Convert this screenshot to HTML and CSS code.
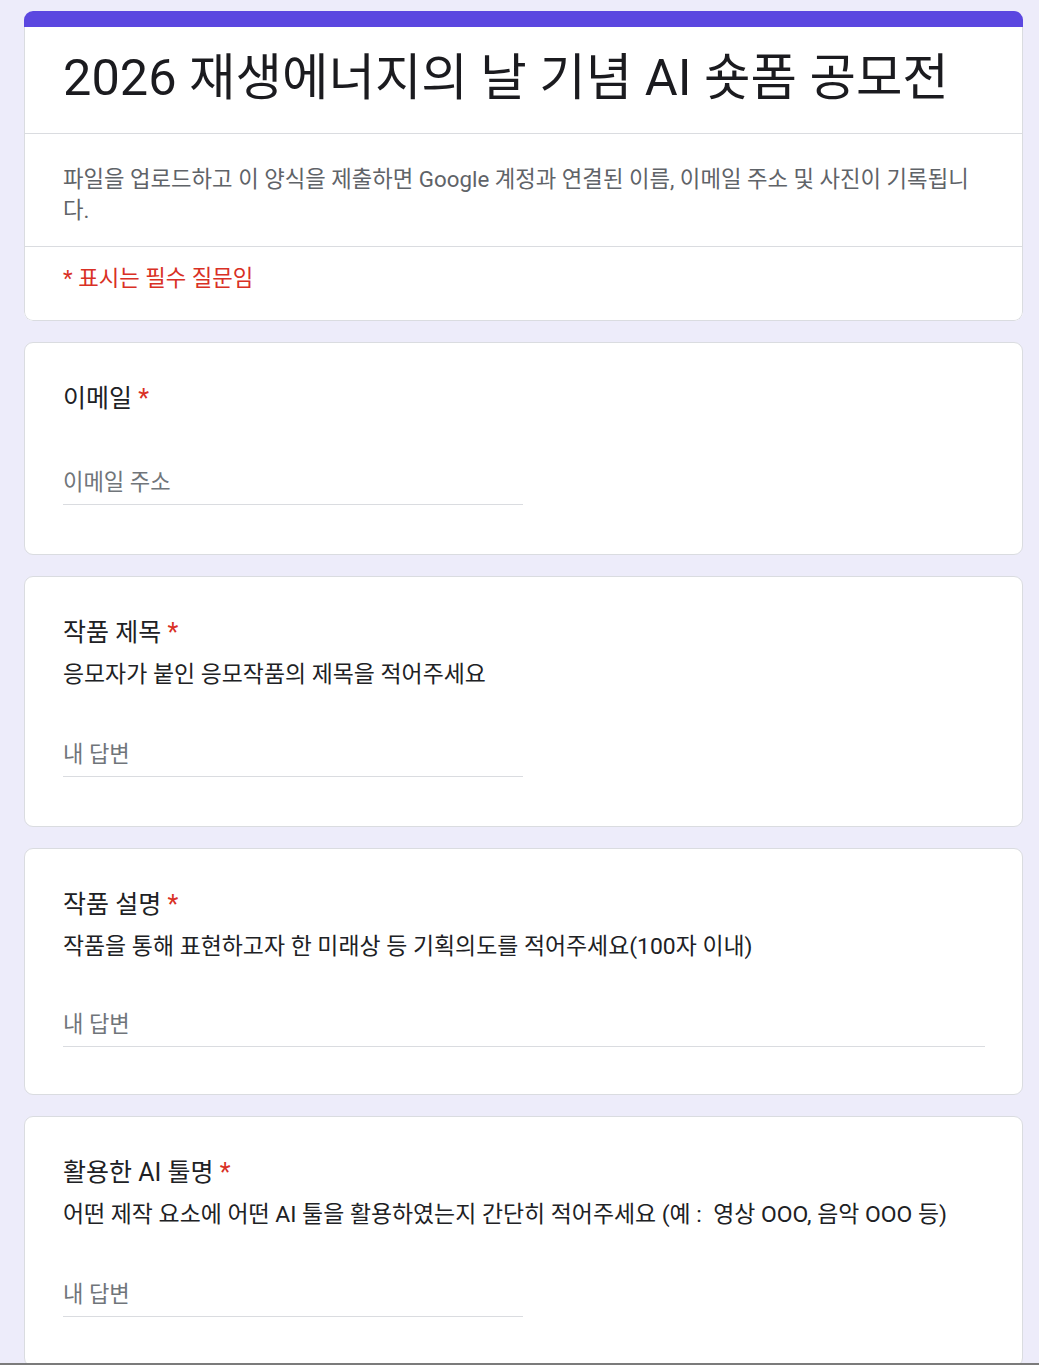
FILE: index.html
```html
<!DOCTYPE html>
<html lang="ko">
<head>
	<meta charset="utf-8">
	<title>2026 재생에너지의 날 기념 AI 숏폼 공모전</title>
	<link rel="stylesheet" href="styles.css">
</head>
<body>
	<div class="screen">
		<div class="form">
			<div class="card card--header">
				<div class="header__bar"></div>
				<div class="header__body">
					<div class="header__title">
						<h1>2026 재생에너지의 날 기념 AI 숏폼 공모전</h1>
					</div>
					<div class="header__desc">
						파일을 업로드하고 이 양식을 제출하면 Google 계정과 연결된 이름, 이메일 주소 및 사진이 기록됩니<br>다.
					</div>
					<div class="header__note">* 표시는 필수 질문임</div>
				</div>
			</div>

			<div class="card q">
				<div class="q__title">이메일 <span class="q__req">*</span></div>
				<div class="q__field">
					<input type="email" class="q__input" placeholder="이메일 주소">
				</div>
			</div>

			<div class="card q">
				<div class="q__title">작품 제목 <span class="q__req">*</span></div>
				<div class="q__desc">응모자가 붙인 응모작품의 제목을 적어주세요</div>
				<div class="q__field">
					<input type="text" class="q__input" placeholder="내 답변">
				</div>
			</div>

			<div class="card q q--long">
				<div class="q__title">작품 설명 <span class="q__req">*</span></div>
				<div class="q__desc">작품을 통해 표현하고자 한 미래상 등 기획의도를 적어주세요(100자 이내)</div>
				<div class="q__field">
					<textarea class="q__input q__input--long" rows="1" placeholder="내 답변"></textarea>
				</div>
			</div>

			<div class="card q">
				<div class="q__title">활용한 AI 툴명 <span class="q__req">*</span></div>
				<div class="q__desc">어떤 제작 요소에 어떤 AI 툴을 활용하였는지 간단히 적어주세요 (예 :&nbsp; 영상 OOO, 음악 OOO 등)</div>
				<div class="q__field">
					<input type="text" class="q__input" placeholder="내 답변">
				</div>
			</div>
		</div>
	</div>
</body>
</html>
```

FILE: styles.css
```css
body {
	margin: 0;
	font-family: Roboto, "Noto Sans CJK KR", sans-serif;
	color: #202124;
	background-color: #edecfa;
}

.screen {
	height: 1363px;
	overflow: hidden;
	border-bottom: 2px solid #7b7b7b;
}

.form {
	width: 999px;
	padding: 11px 0 0 24px;
	display: flex;
	flex-direction: column;
	gap: 21px;
}

.card {
	background-color: #fff;
	border: 1px solid #dadce0;
	border-radius: 9px;
	box-sizing: border-box;
}

/* header card */

.card--header {
	border: none;
	overflow: hidden;
}

.header__bar {
	height: 16px;
	background-color: #5b47e0;
}

.header__body {
	border: 1px solid #dadce0;
	border-top: none;
	border-radius: 0 0 9px 9px;
}

.header__title {
	padding: 21px 38px 25px;
	border-bottom: 1px solid #dadce0;
}

.header__title h1 {
	margin: 0;
	font-size: 50.5px;
	font-weight: 400;
	line-height: 60px;
	color: #1b1b1f;
}

.header__desc {
	padding: 30px 38px 20px;
	font-size: 22.3px;
	line-height: 31px;
	color: #5f6368;
	border-bottom: 1px solid #dadce0;
}

.header__note {
	padding: 16px 38px 26px;
	font-size: 22.3px;
	line-height: 31px;
	color: #d93025;
}

/* question cards */

.q {
	padding: 39px 37px 49px 38px;
}

.q--long {
	padding-bottom: 47px;
}

.q__title {
	font-size: 25px;
	line-height: 34px;
	color: #202124;
}

.q__req {
	color: #d93025;
}

.q__desc {
	margin-top: 8px;
	font-size: 22.9px;
	line-height: 34px;
	color: #202124;
}

.q__field {
	margin-top: 51px;
}

.q__desc + .q__field {
	margin-top: 47px;
}

.q--long .q__desc + .q__field {
	margin-top: 45px;
}

.q__input {
	display: block;
	box-sizing: content-box;
	width: 460px;
	height: 30px;
	margin: 0;
	padding: 0 0 7px;
	border: none;
	border-bottom: 1px solid #dadce0;
	outline: none;
	font-family: inherit;
	font-size: 22.2px;
	line-height: 30px;
	color: #202124;
	background: transparent;
}

.q__input--long {
	width: 100%;
	resize: none;
	overflow: hidden;
}

.q__input::placeholder {
	color: #70757a;
}
```
